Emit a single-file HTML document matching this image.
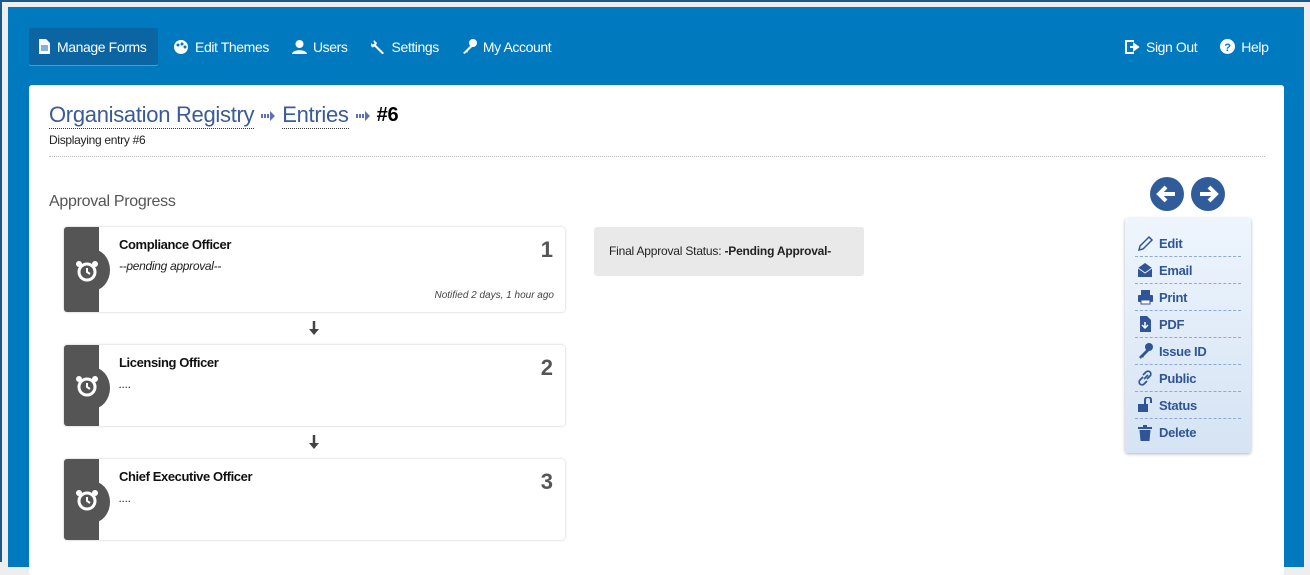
<!DOCTYPE html>
<html><head><meta charset="utf-8"><style>
*{box-sizing:border-box;margin:0;padding:0}
body{width:1310px;height:562px;overflow:hidden;background:#eee;font-family:"Liberation Sans",sans-serif;position:relative}
.frame{position:absolute;left:0;top:0;width:1310px;height:562px;border-top:2px solid #1a5a8a;border-left:2px solid #1a5a8a;background:#efefef}
.blue{position:absolute;left:8px;top:7px;width:1296px;height:560px;background:#0079be}
.nav{position:absolute;top:28px;height:37px;color:#fff;font-size:14px;letter-spacing:-0.4px;display:flex;align-items:center}
.nav span{display:inline-flex;align-items:center;margin-right:15px}
.nav svg{margin-right:6px}
.active{background:#0b65a2;border-radius:2px;padding:0 9px;height:37px;width:129px;box-shadow:0 1px 0 #4b9ad0}
.panel{position:absolute;left:29px;top:85px;width:1255px;height:490px;background:#fff;border-radius:3px}
.crumb{position:absolute;left:20px;top:17px;font-size:22px;letter-spacing:-0.3px;color:#3a5a9a;display:flex;align-items:center}
.crumb a{border-bottom:1px dotted #333;line-height:26px}
.arr{color:#6a7ac0;font-size:14px;margin:0 7px}
.sub{position:absolute;left:20px;top:48px;font-size:12px;color:#222;letter-spacing:-0.3px}
.hr{position:absolute;left:20px;right:19px;top:71px;border-top:1px dotted #bbb}
.h{position:absolute;left:20px;top:108px;font-size:16px;color:#555;letter-spacing:-0.3px}
.card{position:absolute;left:35px;width:501px;background:#fff;border-radius:3px;box-shadow:0 0 2px rgba(0,0,0,.25)}
.side{position:absolute;left:0;top:0;bottom:0;width:35px;background:#555;border-radius:3px 0 0 3px}
.bump{position:absolute;left:10px;top:22px;width:36px;height:42px;border-radius:50%;background:#555}
.card .t{position:absolute;left:55px;top:10px;font-size:13px;font-weight:bold;color:#111;letter-spacing:-0.4px}
.card .s{position:absolute;left:55px;top:32px;font-size:12px;color:#222;font-style:italic;letter-spacing:-0.3px}
.card .n{position:absolute;right:12px;top:10px;font-size:22px;font-weight:bold;color:#555}
.card .nt{position:absolute;right:11px;bottom:11px;font-size:10px;font-style:italic;color:#444}
.down{position:absolute;left:280px}
.status{position:absolute;left:565px;top:142px;width:270px;height:49px;background:#e9e9e9;border-radius:3px;font-size:12px;color:#222;padding:17px 15px;letter-spacing:-0.2px}
.menu{position:absolute;left:1096px;top:133px;width:126px;height:235px;background:linear-gradient(#eef5fd,#d5e3f4);border-radius:3px;box-shadow:0 1px 3px rgba(0,0,0,.3);padding:12px 10px 0}
.menu div{height:27px;border-bottom:1px dashed #8eaad6;display:flex;align-items:center;color:#2f5596;font-size:13px;font-weight:bold;padding-left:2px;letter-spacing:-0.3px}
.menu div:last-child{border:none}
.menu svg{margin-right:5px}
.circ{position:absolute;top:92px}
</style></head><body>
<div class="frame"></div>
<div class="blue"></div>
<div class="nav" style="left:29px">
<span class="active"><svg width="13" height="15"><path d="M1 0h7l4 4v11H1z" fill="#fff"/><path d="M3 7h7M3 9h7M3 11h7" stroke="#0b65a2"/></svg>Manage Forms</span>
<span><svg width="16" height="14"><circle cx="8" cy="7" r="7" fill="#fff"/><circle cx="5" cy="5" r="1.5" fill="#0079be"/><circle cx="9" cy="4" r="1.5" fill="#0079be"/><circle cx="12" cy="7" r="1.5" fill="#0079be"/></svg>Edit Themes</span>
<span style="margin-left:8px"><svg width="15" height="14"><circle cx="7.5" cy="4" r="4" fill="#fff"/><path d="M0 14c0-5 15-5 15 0z" fill="#fff"/></svg>Users</span>
<span style="margin-left:8px"><svg width="15" height="15"><path d="M3 1l3 3-1 2 8 8-1.5 1.5-8-8-2 1-3-3 1-2 2 2 2-1-1-2z" fill="#fff"/></svg>Settings</span>
<span style="margin-left:8px"><svg width="15" height="15"><circle cx="11" cy="4" r="4" fill="#fff"/><path d="M9 6L1 14l2 1 1-2 1 1 1-2 5-5z" fill="#fff"/></svg>My Account</span>
</div>
<div class="nav" style="left:1125px">
<span style="margin-right:23px"><svg width="15" height="14"><path d="M9 1H1v12h8" stroke="#fff" stroke-width="2" fill="none"/><path d="M5 7h6M9 4l4 3-4 3z" stroke="#fff" stroke-width="2" fill="#fff"/></svg>Sign Out</span>
<span style="margin-right:0"><svg width="15" height="15"><circle cx="7.5" cy="7.5" r="7.5" fill="#fff"/><text x="4.3" y="12" font-size="11" font-weight="bold" fill="#0079be" font-family="Liberation Sans">?</text></svg>Help</span>
</div>
<div class="panel">
<div class="crumb"><a>Organisation Registry</a><span class="arr"><svg width="14" height="10"><path d="M0 3h2v4H0zM3 3h2v4H3zM6 3h2v4H6zM9 0l5 5-5 5z" fill="#5a70b8"/></svg></span><a>Entries</a><span class="arr"><svg width="14" height="10"><path d="M0 3h2v4H0zM3 3h2v4H3zM6 3h2v4H6zM9 0l5 5-5 5z" fill="#5a70b8"/></svg></span><span style="color:#000;font-weight:bold;font-size:20px">#6</span></div>
<div class="sub">Displaying entry #6</div>
<div class="hr"></div>
<div class="h">Approval Progress</div>
<div class="card" style="top:142px;height:85px"><div class="bump"></div><div class="side"></div><svg style="position:absolute;left:11px;top:33px" width="24" height="22"><circle cx="12" cy="12" r="8" fill="none" stroke="#fff" stroke-width="3"/><path d="M12 8v4l3 2" stroke="#fff" stroke-width="2" fill="none"/><circle cx="4" cy="4" r="3" fill="#fff"/><circle cx="20" cy="4" r="3" fill="#fff"/></svg><div class="t">Compliance Officer</div><div class="s">--pending approval--</div><div class="n">1</div><div class="nt">Notified 2 days, 1 hour ago</div></div>
<svg class="down" style="top:236px" width="10" height="14"><path d="M5 0v8" stroke="#444" stroke-width="2.5"/><path d="M0 8h10l-5 6z" fill="#444"/></svg>
<div class="card" style="top:260px;height:81px"><div class="bump"></div><div class="side"></div><svg style="position:absolute;left:11px;top:30px" width="24" height="22"><circle cx="12" cy="12" r="8" fill="none" stroke="#fff" stroke-width="3"/><path d="M12 8v4l3 2" stroke="#fff" stroke-width="2" fill="none"/><circle cx="4" cy="4" r="3" fill="#fff"/><circle cx="20" cy="4" r="3" fill="#fff"/></svg><div class="t">Licensing Officer</div><div class="s">....</div><div class="n">2</div></div>
<svg class="down" style="top:350px" width="10" height="14"><path d="M5 0v8" stroke="#444" stroke-width="2.5"/><path d="M0 8h10l-5 6z" fill="#444"/></svg>
<div class="card" style="top:374px;height:81px"><div class="bump"></div><div class="side"></div><svg style="position:absolute;left:11px;top:30px" width="24" height="22"><circle cx="12" cy="12" r="8" fill="none" stroke="#fff" stroke-width="3"/><path d="M12 8v4l3 2" stroke="#fff" stroke-width="2" fill="none"/><circle cx="4" cy="4" r="3" fill="#fff"/><circle cx="20" cy="4" r="3" fill="#fff"/></svg><div class="t">Chief Executive Officer</div><div class="s">....</div><div class="n">3</div></div>
<div class="status">Final Approval Status: <b>-Pending Approval-</b></div>
<svg class="circ" style="left:1121px" width="34" height="34"><circle cx="17" cy="17" r="17" fill="#315c9c"/><path d="M25 17H10M16 10l-7 7 7 7" stroke="#fff" stroke-width="4" fill="none"/></svg>
<svg class="circ" style="left:1162px" width="34" height="34"><circle cx="17" cy="17" r="17" fill="#315c9c"/><path d="M9 17h15M18 10l7 7-7 7" stroke="#fff" stroke-width="4" fill="none"/></svg>
<div class="menu">
<div><svg width="17" height="16"><path d="M2 15l1-4 9-9 3 3-9 9z" fill="none" stroke="#2f5596" stroke-width="1.5"/></svg>Edit</div>
<div><svg width="17" height="16"><path d="M1 6l7-5 7 5v9H1z" fill="#2f5596"/><path d="M1 6l7 5 7-5" stroke="#e5eefa" fill="none"/></svg>Email</div>
<div><svg width="17" height="16"><rect x="4" y="1" width="9" height="5" fill="#2f5596"/><rect x="1" y="6" width="15" height="7" rx="1" fill="#2f5596"/><rect x="4" y="11" width="9" height="4" fill="#fff" stroke="#2f5596"/></svg>Print</div>
<div><svg width="17" height="16"><path d="M3 0h7l4 4v12H3z" fill="#2f5596"/><path d="M8 6v5M5 9l3 3 3-3" stroke="#fff" stroke-width="1.5" fill="none"/></svg>PDF</div>
<div><svg width="17" height="16"><circle cx="12" cy="4" r="4" fill="#2f5596"/><path d="M10 6L2 14l2 2 1-2 1 1 1-2 5-5z" fill="#2f5596"/></svg>Issue ID</div>
<div><svg width="17" height="16"><path d="M7 9l4-4M6 7L3 10a2.5 2.5 0 004 4l3-3M10 9l3-3a2.5 2.5 0 00-4-4L6 5" stroke="#2f5596" stroke-width="1.7" fill="none"/></svg>Public</div>
<div><svg width="17" height="16"><rect x="1" y="7" width="10" height="8" fill="#2f5596"/><path d="M8 7V3a3 3 0 016 0v3" stroke="#2f5596" stroke-width="2" fill="none"/></svg>Status</div>
<div><svg width="17" height="16"><path d="M1 3h14" stroke="#2f5596" stroke-width="2"/><path d="M6 1h4" stroke="#2f5596" stroke-width="2"/><path d="M2.5 5h11l-1 11h-9z" fill="#2f5596"/></svg>Delete</div>
</div>
</div>
</body></html>
